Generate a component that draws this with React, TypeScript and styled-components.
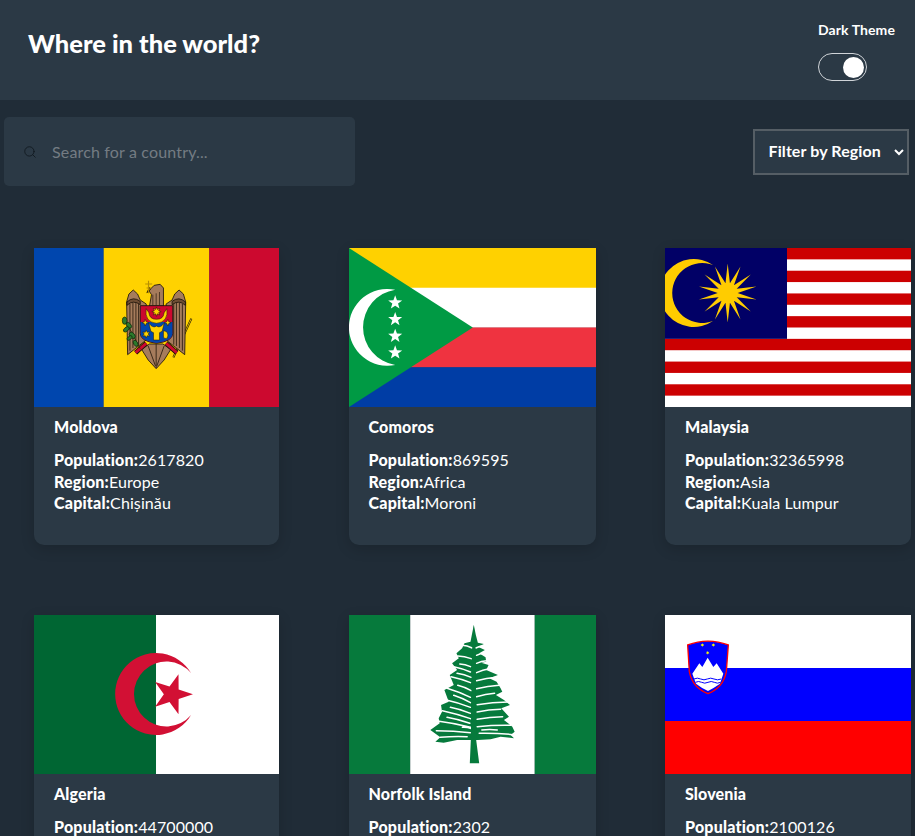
import React from "react";
import styled, { createGlobalStyle } from "styled-components";
import { Search } from "lucide-react";

const GlobalStyle = createGlobalStyle`
  html, body { margin: 0; height: 100%; overflow: hidden; background: #202c37; }
  * { box-sizing: border-box; }
  body { font-family: "Lato", "Open Sans", sans-serif; color: #fff; }
`;

const Page = styled.div`
  width: 915px;
  height: 836px;
  overflow: hidden;
  background: #202c37;
`;
const Header = styled.header`
  height: 100px;
  background: #2b3945;
  display: flex;
  justify-content: space-between;
  padding: 0 20px 0 28px;
`;
const Title = styled.h1`
  margin: 28px 0 0;
  font-size: 25.5px;
  line-height: 30px;
  font-weight: 900;
`;
const ThemeBox = styled.div`
  display: flex;
  flex-direction: column;
  align-items: flex-start;
  padding-top: 21px;
`;
const ThemeLabel = styled.span`
  font-size: 14px;
  line-height: 18px;
  font-weight: 700;
  letter-spacing: 0.1px;
`;
const Toggle = styled.div`
  margin-top: 14px;
  width: 49.5px;
  height: 28px;
  border: 1.5px solid #d0d4d8;
  border-radius: 14px;
  display: flex;
  align-items: center;
  justify-content: flex-end;
  padding-right: 2.5px;
`;
const Knob = styled.div`
  width: 21px;
  height: 21px;
  border-radius: 50%;
  background: #fff;
`;
const Controls = styled.div`
  display: flex;
  justify-content: space-between;
  align-items: center;
  padding: 17px 6px 0 4px;
`;
const SearchBox = styled.label`
  width: 351px;
  height: 69px;
  background: #2b3945;
  border-radius: 5px;
  display: flex;
  align-items: center;
  padding-left: 18.5px;
  gap: 15.5px;
  color: #10181f;
`;
const SearchInput = styled.input`
  flex: 1;
  min-width: 0;
  height: 22px;
  margin-top: -1px;
  padding: 0;
  background: transparent;
  border: 0;
  outline: 0;
  color: #fff;
  font: 400 16px "Lato", sans-serif;
  letter-spacing: 0.16px;
  &::placeholder { color: #747c83; opacity: 1; }
`;
const RegionSelect = styled.select`
  width: 156px;
  height: 46px;
  background: #2b3945;
  border: 2px solid #555e65;
  border-radius: 0;
  color: #fff;
  font: 700 16px "Lato", sans-serif;
  letter-spacing: 0.1px;
  padding: 0 0 2px 9.5px;
  outline: 0;
`;
const Grid = styled.main`
  display: grid;
  grid-template-columns: 245px 247px 246px;
  column-gap: 69.5px;
  row-gap: 70px;
  padding: 62px 0 0 34px;
`;
const Card = styled.article`
  height: 297px;
  background: #2b3945;
  border-radius: 0 0 10px 10px;
  box-shadow: 0 4px 14px rgba(0, 0, 0, 0.16);
`;
const FlagSvg = styled.svg`
  display: block;
  width: 100%;
  height: 159px;
`;
const Info = styled.div`
  padding: 9px 20px 0;
`;
const Name = styled.h2`
  margin: 0 0 11px;
  font-size: 16px;
  line-height: 22px;
  font-weight: 900;
  letter-spacing: 0.15px;
`;
const Fact = styled.p`
  margin: 0;
  font-size: 16px;
  line-height: 21.6px;
  font-weight: 400;
  letter-spacing: 0.1px;
  b { font-weight: 900; letter-spacing: 0.2px; }
`;

const star = (cx: number, cy: number, n: number, R: number, r: number, rot = -90) => {
  const pts: string[] = [];
  for (let i = 0; i < n * 2; i++) {
    const a = ((rot + (i * 180) / n) * Math.PI) / 180;
    const d = i % 2 === 0 ? R : r;
    pts.push(`${(cx + d * Math.cos(a)).toFixed(2)},${(cy + d * Math.sin(a)).toFixed(2)}`);
  }
  return pts.join(" ");
};

const Flag: React.FC<{ children: React.ReactNode }> = ({ children }) => (
  <FlagSvg viewBox="0 0 246 159" preserveAspectRatio="none">{children}</FlagSvg>
);

const Moldova = () => (
  <Flag>
    <rect width="70" height="159" fill="#0046ae" />
    <rect x="70" width="106" height="159" fill="#ffd200" />
    <rect x="176" width="70" height="159" fill="#cc092f" />
    <g transform="translate(66 12) scale(.3333)" stroke="#1a1208" strokeWidth="2.5" strokeLinejoin="round">
      <path d="M276 176 L222 292" stroke="#1a1208" strokeWidth="6" fill="none" />
      <path d="M276 176 L222 292" stroke="#d9b000" strokeWidth="3" fill="none" />
      <path d="M84 284 L81 126 L88 102 L101 90 L114 102 L122 120 L140 132 L140 240 L112 262 Z" fill="#a67c5c" />
      <path d="M256 284 L259 126 L252 102 L239 90 L226 102 L218 120 L200 132 L200 240 L228 262 Z" fill="#a67c5c" />
      <path d="M82 126 Q101 108 122 124 L122 134 Q101 118 82 136 Z M258 126 Q239 108 218 124 L218 134 Q239 118 258 136 Z" fill="#6f4e34" />
      <path d="M91 272 V132 M100 264 V128 M109 258 V128 M117 254 V130 M249 272 V132 M240 264 V128 M231 258 V128 M223 254 V130" fill="none" stroke="#3c2a1a" strokeWidth="3" />
      <path d="M150 138 L156 104 L148 92 L164 76 L182 73 L192 84 L192 138 Z" fill="#a67c5c" />
      <path d="M160 104 V136 M170 100 V136 M180 96 V136" stroke="#3c2a1a" strokeWidth="2.5" fill="none" />
      <path d="M152 90 L142 98 L150 82 Z" fill="#d9a300" />
      <path d="M147 62 V100 M137 72 H158 M141 84 H154" stroke="#b88f00" strokeWidth="3.5" fill="none" />
      <path d="M126 268 L146 300 L170 326 L194 300 L214 268 L190 252 L150 252 Z" fill="#a67c5c" />
      <path d="M146 258 L168 318 M170 252 V324 M194 258 L172 318" stroke="#3c2a1a" strokeWidth="3" fill="none" />
      <path d="M108 278 L140 250" stroke="#1a1208" strokeWidth="14" fill="none" />
      <path d="M108 278 L140 250" stroke="#cc092f" strokeWidth="9" fill="none" />
      <path d="M232 278 L200 250" stroke="#1a1208" strokeWidth="14" fill="none" />
      <path d="M232 278 L200 250" stroke="#cc092f" strokeWidth="9" fill="none" />
      <path d="M74 176 L122 266" stroke="#3d2a10" strokeWidth="3" fill="none" />
      <g fill="#2c7a2c" stroke="#10260c" strokeWidth="2">
        <ellipse cx="75" cy="182" rx="7" ry="11" />
        <ellipse cx="88" cy="196" rx="6" ry="10" transform="rotate(-40 88 196)" />
        <ellipse cx="80" cy="208" rx="6" ry="10" transform="rotate(50 80 208)" />
        <ellipse cx="98" cy="226" rx="7" ry="11" transform="rotate(-40 98 226)" />
        <ellipse cx="90" cy="234" rx="5" ry="9" transform="rotate(50 90 234)" />
        <ellipse cx="108" cy="250" rx="6" ry="10" transform="rotate(-30 108 250)" />
      </g>
      <path d="M122 137 H220 V220 Q220 244 171 250 Q122 244 122 220 Z" fill="#cc092f" />
      <path d="M123 186 H219 V220 Q219 243 171 249 Q123 243 123 220 Z" fill="#0046ae" stroke="none" />
      <path d="M140 146 Q134 186 171 190 Q208 186 202 146 L194 158 Q192 178 171 178 Q150 178 148 158 Z" fill="#ffd200" strokeWidth="1.5" />
      <polygon points={star(171, 155, 8, 14, 7)} fill="#ffd200" strokeWidth="1.5" />
      <path d="M148 190 Q160 206 171 198 Q182 206 194 190 L188 214 L180 218 L180 240 L162 240 L162 218 L154 214 Z" fill="#ffd200" strokeWidth="1.5" />
      <polygon points={star(137, 188, 4, 10, 4)} fill="#ffd200" strokeWidth="1.5" />
      <polygon points={star(205, 188, 4, 10, 4)} fill="#ffd200" strokeWidth="1.5" />
      <polygon points={star(140, 222, 6, 12, 6)} fill="#ffd200" strokeWidth="1.5" />
      <path d="M192 212 Q210 214 204 234 Q196 238 192 232 Z" fill="#ffd200" strokeWidth="1.5" />
    </g>
  </Flag>
);

const Comoros = () => (
  <Flag>
    <rect width="246" height="40" fill="#ffd100" />
    <rect y="39.75" width="246" height="40" fill="#fff" />
    <rect y="79.5" width="246" height="40" fill="#ef3340" />
    <rect y="119.25" width="246" height="40" fill="#003da5" />
    <polygon points="0,0 123.3,79.5 0,159" fill="#009a44" />
    <g transform="translate(0 -8) scale(.3333)">
      <path d="M138 149 A115.3 115.3 0 1 0 138 375 A114.5 114.5 0 0 1 138 149 Z" fill="#fff" />
      {[188, 238, 288, 338].map((y) => (
        <polygon key={y} points={star(138, y, 5, 22, 9)} fill="#fff" />
      ))}
    </g>
  </Flag>
);

const Malaysia = () => (
  <Flag>
    <rect width="246" height="159" fill="#fff" />
    {Array.from({ length: 7 }, (_, i) => (
      <rect key={i} y={(i * 2 * 159) / 14} width="246" height={159 / 14} fill="#cc0001" />
    ))}
    <rect width="122" height={(159 * 8) / 14} fill="#010066" />
    <path d="M48 17 A34 34 0 1 0 48 73 A30 30 0 1 1 48 17 Z" fill="#fc0" />
    <polygon points={star(62.7, 45, 14, 29.5, 10)} fill="#fc0" />
  </Flag>
);

const Algeria = () => (
  <Flag>
    <rect width="246" height="159" fill="#fff" />
    <rect width="122.5" height="159" fill="#006633" />
    <path d="M157.7 58 A41 41 0 1 0 157.7 100 A32.5 32.5 0 1 1 157.7 58 Z" fill="#d21034" />
    <polygon points={star(138.6, 79.3, 5, 21, 8.2, 0)} fill="#d21034" />
  </Flag>
);

const treeOutline =
  "M160 15 L166 45 L172 68 L190 72 L172 80 L193 90 L176 100 L195 112 L197 125 L182 128 L204 135 L197 150 L232 165 L206 175 L228 185 L240 205 L245 215 L226 225 L250 240 L268 255 L242 265 L265 290 L250 300 L275 320 L282 335 L270 345 L280 355 L240 350 L210 358 L172 360 L150 360 L110 360 L70 368 L45 365 L60 352 L30 330 L58 310 L55 295 L65 275 L62 255 L85 245 L72 210 L100 195 L88 165 L110 150 L95 130 L115 115 L108 100 L125 85 L132 70 L150 65 L155 40 Z";

const treeSlits = (() => {
  const left = [[125,76,155,84],[112,108,152,116],[100,140,150,156],[118,132,150,140],[92,170,150,188],[110,160,152,172],[80,205,150,232],[112,196,152,212],[78,240,150,262],[100,226,150,248],[66,272,150,296],[90,262,150,280],[56,304,150,322],[80,292,148,310],[48,332,150,338],[126,322,152,326],[60,352,140,350]];
  const right = [[166,84,188,78],[168,106,192,100],[168,130,198,122],[168,158,206,146],[168,182,228,172],[168,206,236,196],[168,230,222,220],[170,254,262,246],[170,276,240,268],[170,298,246,290],[170,320,270,316],[176,340,278,344],[184,330,230,330]];
  return [...left, ...right]
    .map(([x1, y1, x2, y2]) => `M${x1} ${y1} Q${(x1 + x2) / 2} ${(y1 + y2) / 2 - 3} ${x2} ${y2}`)
    .join(" ");
})();

const Norfolk = () => (
  <Flag>
    <rect width="61" height="159" fill="#067a3c" />
    <rect x="61" width="124" height="159" fill="#fff" />
    <rect x="185" width="61" height="159" fill="#067a3c" />
    <g transform="translate(71 5) scale(.3333)" fill="#067a3c">
      <path d={treeOutline} />
      <path d={treeSlits} fill="none" stroke="#fff" strokeWidth="4.5" strokeLinecap="round" />
      <path d="M160 14 L165 90 L167 360 L176 430 L148 430 L151 360 L155 90 Z" />
    </g>
  </Flag>
);

const Slovenia = () => (
  <Flag>
    <rect width="246" height="53" fill="#fff" />
    <rect y="53" width="246" height="53" fill="#00f" />
    <rect y="106" width="246" height="53" fill="#f00" />
    <g transform="translate(-5 -10) scale(.3333)">
      <path d="M83 120 Q144 97 205 120 L199 200 Q190 248 144 266 Q97 248 88 200 Z" fill="#00f" stroke="#f00" strokeWidth="4" />
      <path d="M97 206 L118 175 L127 186 L143 158 L160 186 L170 175 L190 206 L180 236 Q160 250 144 258 Q126 250 108 236 Z" fill="#fff" />
      <path d="M102 222 q10 -5 20 0 t20 0 t20 0 t22 0 M106 232 q10 -5 19 0 t19 0 t19 0 t19 0" fill="none" stroke="#00f" strokeWidth="3" />
      {[[127, 120], [160, 120], [143, 143]].map(([x, y]) => (
        <polygon key={x} points={star(x, y, 6, 6, 2.5)} fill="#ff0" />
      ))}
    </g>
  </Flag>
);

const countries = [
  { name: "Moldova", population: 2617820, region: "Europe", capital: "Chișinău", flag: <Moldova /> },
  { name: "Comoros", population: 869595, region: "Africa", capital: "Moroni", flag: <Comoros /> },
  { name: "Malaysia", population: 32365998, region: "Asia", capital: "Kuala Lumpur", flag: <Malaysia /> },
  { name: "Algeria", population: 44700000, region: "Africa", capital: "Algiers", flag: <Algeria /> },
  { name: "Norfolk Island", population: 2302, region: "Oceania", capital: "Kingston", flag: <Norfolk /> },
  { name: "Slovenia", population: 2100126, region: "Europe", capital: "Ljubljana", flag: <Slovenia /> },
];

export default function App() {
  return (
    <Page>
      <GlobalStyle />
      <Header>
        <Title>Where in the world?</Title>
        <ThemeBox>
          <ThemeLabel>Dark Theme</ThemeLabel>
          <Toggle><Knob /></Toggle>
        </ThemeBox>
      </Header>
      <Controls>
        <SearchBox>
          <Search size={14} strokeWidth={1.5} />
          <SearchInput placeholder="Search for a country..." />
        </SearchBox>
        <RegionSelect defaultValue="">
          <option value="">Filter by Region</option>
          <option>Africa</option>
          <option>Americas</option>
          <option>Asia</option>
          <option>Europe</option>
          <option>Oceania</option>
        </RegionSelect>
      </Controls>
      <Grid>
        {countries.map((c) => (
          <Card key={c.name}>
            {c.flag}
            <Info>
              <Name>{c.name}</Name>
              <Fact><b>Population:</b>{c.population}</Fact>
              <Fact><b>Region:</b>{c.region}</Fact>
              <Fact><b>Capital:</b>{c.capital}</Fact>
            </Info>
          </Card>
        ))}
      </Grid>
    </Page>
  );
}
